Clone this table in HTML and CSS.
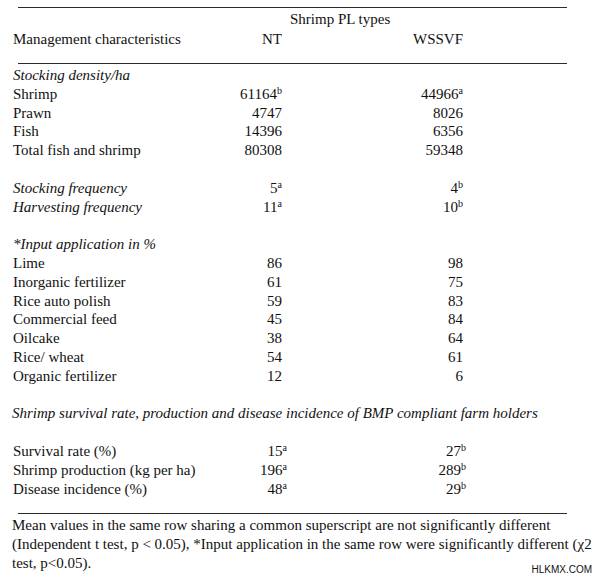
FILE: index.html
```html
<!DOCTYPE html>
<html>
<head>
<meta charset="utf-8">
<link rel="stylesheet" href="styles.css">
</head>
<body>
<div class="page">
  <div class="rule rule-top"></div>
  <div class="head">
    <div class="group-title">Shrimp PL types</div>
    <div class="row">
      <span class="label">Management characteristics</span>
      <span class="val">NT</span>
      <span class="val">WSSVF</span>
    </div>
  </div>
  <div class="rule rule-mid"></div>
  <div class="body">
    <div class="row"><span class="label section">Stocking density/ha</span></div>
    <div class="row"><span class="label">Shrimp</span><span class="val">61164<sup>b</sup></span><span class="val">44966<sup>a</sup></span></div>
    <div class="row"><span class="label">Prawn</span><span class="val">4747</span><span class="val">8026</span></div>
    <div class="row"><span class="label">Fish</span><span class="val">14396</span><span class="val">6356</span></div>
    <div class="row"><span class="label">Total fish and shrimp</span><span class="val">80308</span><span class="val">59348</span></div>
    <div class="row blank"></div>
    <div class="row"><span class="label section">Stocking frequency</span><span class="val">5<sup>a</sup></span><span class="val">4<sup>b</sup></span></div>
    <div class="row"><span class="label section">Harvesting frequency</span><span class="val">11<sup>a</sup></span><span class="val">10<sup>b</sup></span></div>
    <div class="row blank"></div>
    <div class="row"><span class="label section">*Input application in %</span></div>
    <div class="row"><span class="label">Lime</span><span class="val">86</span><span class="val">98</span></div>
    <div class="row"><span class="label">Inorganic fertilizer</span><span class="val">61</span><span class="val">75</span></div>
    <div class="row"><span class="label">Rice auto polish</span><span class="val">59</span><span class="val">83</span></div>
    <div class="row"><span class="label">Commercial feed</span><span class="val">45</span><span class="val">84</span></div>
    <div class="row"><span class="label">Oilcake</span><span class="val">38</span><span class="val">64</span></div>
    <div class="row"><span class="label">Rice/ wheat</span><span class="val">54</span><span class="val">61</span></div>
    <div class="row"><span class="label">Organic fertilizer</span><span class="val">12</span><span class="val">6</span></div>
    <div class="row blank"></div>
    <div class="row"><span class="label section wide">Shrimp survival rate, production and disease incidence of BMP compliant farm holders</span></div>
    <div class="row blank"></div>
    <div class="row alt"><span class="label">Survival rate (%)</span><span class="val">15<sup>a</sup></span><span class="val">27<sup>b</sup></span></div>
    <div class="row alt"><span class="label">Shrimp production (kg per ha)</span><span class="val">196<sup>a</sup></span><span class="val">289<sup>b</sup></span></div>
    <div class="row alt"><span class="label">Disease incidence (%)</span><span class="val">48<sup>a</sup></span><span class="val">29<sup>b</sup></span></div>
  </div>
  <div class="rule rule-foot"></div>
  <p class="note">Mean values in the same row sharing a common superscript are not significantly different<br>(Independent t test, p &lt; 0.05), *Input application in the same row were significantly different (χ2<br>test, p&lt;0.05).</p>
  <div class="watermark">HLKMX.COM</div>
</div>
</body>
</html>
```

FILE: styles.css
```css
* { box-sizing: border-box; }
html, body {
  margin: 0;
  padding: 0;
  background: #ffffff;
}
.page {
  position: relative;
  width: 600px;
  height: 578px;
  overflow: hidden;
  font-family: "Liberation Serif", "Times New Roman", serif;
  font-size: 15px;
  color: #111111;
}
.rule {
  margin-left: 18px;
  width: 549px;
  height: 1px;
  background: #2a2a2a;
}
.rule-top { margin-top: 7px; }
.head {
  padding-top: 1px;
  line-height: 20px;
}
.group-title {
  padding-left: 290px;
}
.rule-mid { margin-top: 14px; }
.body {
  margin-top: 2px;
  line-height: 18.8px;
}
.row {
  display: grid;
  grid-template-columns: 219px 50px 181px;
  padding-left: 13px;
  white-space: nowrap;
}
.row.alt {
  grid-template-columns: 219px 55px 179px;
}
.blank { height: 18.8px; }
.label { text-align: left; }
.section { font-style: italic; }
.wide { grid-column: 1 / span 3; padding-left: 0; margin-left: -1px; }
.val { text-align: right; }
sup {
  font-size: 10px;
  line-height: 0;
  vertical-align: 5px;
}
.rule-foot { margin-top: 14.6px; }
.note {
  margin: 1.8px 0 0 0;
  padding-left: 12px;
  line-height: 19px;
  white-space: nowrap;
}
.watermark {
  position: absolute;
  right: 8px;
  top: 565px;
  font-family: "Liberation Sans", Arial, sans-serif;
  font-size: 10px;
  line-height: 10px;
  color: #111;
}
```
